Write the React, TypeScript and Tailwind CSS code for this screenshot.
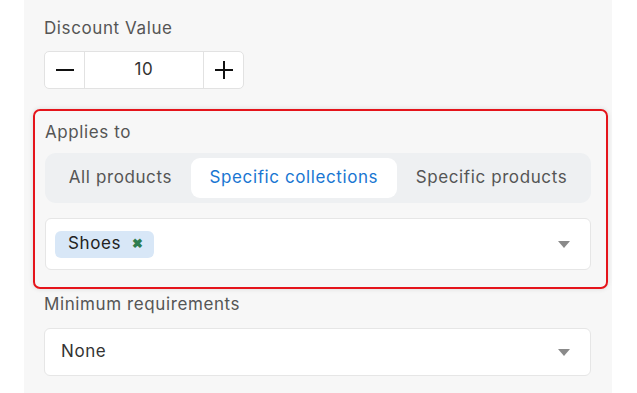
const font = { fontFamily: '"Inter", "Open Sans", sans-serif' };

function Caret() {
  return (
    <svg width="12" height="7" viewBox="0 0 12 7" aria-hidden="true">
      <path d="M0 0h12L6 7z" fill="#8a8a8a" />
    </svg>
  );
}

function Stepper({ value }: { value: number }) {
  return (
    <div className="flex h-[38px] w-[200px] rounded-[5px] border border-[#e2e2e2] bg-white">
      <button className="flex w-[40px] items-center justify-center border-r border-[#e2e2e2]">
        <svg width="20" height="20" viewBox="0 0 20 20">
          <path d="M1 10h18" stroke="#111" strokeWidth="2" />
        </svg>
      </button>
      <div className="flex flex-1 items-center justify-center text-[17px] text-[#333]">{value}</div>
      <button className="flex w-[40px] items-center justify-center border-l border-[#e2e2e2]">
        <svg width="20" height="20" viewBox="0 0 20 20">
          <path d="M1 10h18M10 1v18" stroke="#111" strokeWidth="2" />
        </svg>
      </button>
    </div>
  );
}

export default function App() {
  const tabs = ["All products", "Specific collections", "Specific products"];
  const active = 1;
  return (
    <div className="h-[393px] w-full bg-white tracking-[0.6px]" style={font}>
      <div className="ml-[24px] h-full w-[588px] bg-[#f7f7f7] pl-[20px] pr-[21px] pt-[15px]">
        <div className="h-[26px] text-[17px] leading-[26px] text-[#555]">Discount Value</div>
        <div className="mt-[10px]">
          <Stepper value={10} />
        </div>

        <div className="-ml-[11px] -mr-[17px] mt-[20px] h-[180px] rounded-[7px] border-2 border-[#e5141b] pl-[10px] pr-[15px] pt-[8px] shadow-[0_0_5px_rgba(0,0,0,0.12)]">
          <div className="h-[26px] text-[17px] leading-[26px] text-[#555]">Applies to</div>
          <div className="mt-[8px] flex h-[50px] rounded-[11px] bg-[#eef0f2] p-[5px]">
            {tabs.map((t, i) => (
              <div
                key={t}
                className={`flex flex-auto items-center justify-center rounded-[9px] px-[10px] text-[17px] ${
                  i === active ? "bg-white text-[#1976d2]" : "text-[#555]"
                }`}
              >
                {t}
              </div>
            ))}
          </div>
          <div className="mt-[15px] flex h-[52px] items-center rounded-[6px] border border-[#e6e6e6] bg-white pl-[9px] pr-[20px]">
            <div className="flex h-[27px] items-center gap-[11px] rounded-[6px] bg-[#d8e7f7] pl-[13px] pr-[10px] text-[17px] text-[#222]">
              Shoes
              <span className="text-[13px] font-bold text-[#2e7d4f]">✖</span>
            </div>
            <div className="flex-1" />
            <Caret />
          </div>
        </div>

        <div className="mt-[2px] h-[26px] text-[17px] leading-[26px] text-[#555]">Minimum requirements</div>
        <div className="mt-[11px] flex h-[48px] items-center rounded-[6px] border border-[#e6e6e6] bg-white pl-[16px] pr-[20px]">
          <span className="flex-1 text-[17px] text-[#333]">None</span>
          <Caret />
        </div>
      </div>
    </div>
  );
}
